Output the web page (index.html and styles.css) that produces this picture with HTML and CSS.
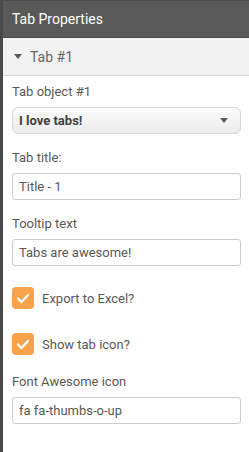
FILE: index.html
```html
<!DOCTYPE html>
<html>
<head>
<meta charset="utf-8">
<link rel="stylesheet" href="styles.css">
</head>
<body>
<div class="panel">
  <div class="header">Tab Properties</div>
  <div class="section">
    <span class="caret"></span>
    <span class="section-title">Tab #1</span>
  </div>
  <div class="content">
    <div class="field">
      <div class="label">Tab object #1</div>
      <div class="select">
        <span>I love tabs!</span>
        <span class="select-caret"></span>
      </div>
    </div>
    <div class="field">
      <div class="label">Tab title:</div>
      <div class="input">Title - 1</div>
    </div>
    <div class="field">
      <div class="label">Tooltip text</div>
      <div class="input">Tabs are awesome!</div>
    </div>
    <div class="check">
      <span class="box"><svg width="14" height="11" viewBox="0 0 14 11"><path d="M2 5.5 L5.5 9 L12 2" fill="none" stroke="#fff" stroke-width="2.4" stroke-linecap="round" stroke-linejoin="round"/></svg></span>
      <span class="check-label">Export to Excel?</span>
    </div>
    <div class="check">
      <span class="box"><svg width="14" height="11" viewBox="0 0 14 11"><path d="M2 5.5 L5.5 9 L12 2" fill="none" stroke="#fff" stroke-width="2.4" stroke-linecap="round" stroke-linejoin="round"/></svg></span>
      <span class="check-label">Show tab icon?</span>
    </div>
    <div class="field">
      <div class="label">Font Awesome icon</div>
      <div class="input">fa fa-thumbs-o-up</div>
    </div>
  </div>
</div>
</body>
</html>
```
FILE: styles.css
```css
html, body {
  margin: 0;
  padding: 0;
  background: #fff;
}
body {
  font-family: Roboto, "Liberation Sans", sans-serif;
  font-size: 13px;
  color: #595959;
}
.panel {
  width: 249px;
  height: 452px;
  box-sizing: border-box;
  border-left: 3px solid #4a4a4a;
  background: #fff;
}
.header {
  height: 38px;
  box-sizing: border-box;
  background: #595959;
  border-top: 1px solid #4a4a4a;
  border-bottom: 1px solid #4a4a4a;
  color: #fff;
  font-size: 14px;
  padding-left: 9px;
  display: flex;
  align-items: center;
}
.section {
  height: 38px;
  box-sizing: border-box;
  background: #f2f2f2;
  border-bottom: 1px solid #d9d9d9;
  display: flex;
  align-items: center;
  padding-left: 11px;
  gap: 8px;
}
.caret {
  width: 0;
  height: 0;
  border-left: 4px solid transparent;
  border-right: 4px solid transparent;
  border-top: 5px solid #595959;
}
.section-title {
  font-size: 14px;
  color: #666;
}
.content {
  padding: 6px 8px 0 9px;
}
.field {
  margin-bottom: 14px;
}
.label {
  height: 20px;
  line-height: 20px;
  margin-bottom: 5px;
}
.select, .input {
  height: 27px;
  box-sizing: border-box;
  border: 1px solid #cccccc;
  border-radius: 3px;
  display: flex;
  align-items: center;
  padding-left: 6px;
}
.select {
  border-radius: 6px;
  background: linear-gradient(#fbfbfb, #ececec);
  font-weight: bold;
  color: #404040;
  justify-content: space-between;
  padding-right: 12px;
  border-color: #d6d6d6;
}
.select-caret {
  width: 0;
  height: 0;
  border-left: 4px solid transparent;
  border-right: 4px solid transparent;
  border-top: 5px solid #595959;
}
.input {
  background: #fff;
  color: #595959;
}
.check {
  display: flex;
  align-items: center;
  gap: 8px;
  height: 22px;
  margin-top: 21px;
  margin-bottom: 17px;
}
.check + .check {
  margin-top: 24px;
}
.box {
  width: 22px;
  height: 22px;
  border-radius: 4px;
  background: #f9a24c;
  display: flex;
  align-items: center;
  justify-content: center;
}
.check-label {
  color: #595959;
}
```
